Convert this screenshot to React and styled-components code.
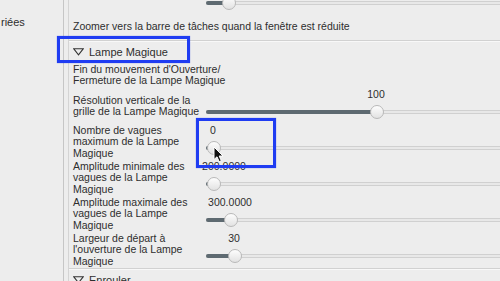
import React from 'react'
import styled, { createGlobalStyle } from 'styled-components'

const GlobalStyle = createGlobalStyle`
    html, body {
        margin: 0;
        padding: 0;
        background: #ededed;
    }
    body {
        font-family: "Liberation Sans", Arial, sans-serif;
    }
`

const Window = styled.div`
    position: relative;
    width: 500px;
    height: 281px;
    overflow: hidden;
    display: flex;
    gap: 4px;
    background: #ededed;
    color: #2e2e2e;
    font-size: 10.5px;
`

const Sidebar = styled.div`
    box-sizing: border-box;
    width: 64px;
    flex-shrink: 0;
    padding: 16px 0 0 1px;
    border-right: 1px solid #c6c6c6;
    font-size: 11px;
    line-height: 12px;
    white-space: nowrap;
`

const Panel = styled.div`
    flex: 1;
    min-width: 0;
    display: flex;
    flex-direction: column;
    border-left: 1px solid #d4d4d4;
`

const Scrolled = styled.div`
    margin-top: -21px;
    display: flex;
    flex-direction: column;
`

const Row = styled.div`
    box-sizing: border-box;
    display: grid;
    grid-template-columns: 133px 1fr;
    align-items: center;
    height: ${(p) => p.$height || 36}px;
    padding-left: 4px;
`

const PlainRow = styled.div`
    box-sizing: border-box;
    display: flex;
    align-items: center;
    height: ${(p) => p.$height}px;
    padding: 0 0 ${(p) => p.$bottom || 0}px 4px;
    line-height: 11.5px;
    white-space: nowrap;
`

const Label = styled.div`
    line-height: 11.5px;
    white-space: nowrap;
`

const Separator = styled.div`
    height: 1px;
    background: #d1d1d1;
    box-shadow: 0 1px 0 #f8f8f8;
    margin-bottom: 1px;
`

const Header = styled.div`
    box-sizing: border-box;
    display: flex;
    align-items: center;
    gap: 5px;
    height: 20px;
    padding-left: 4px;
    font-size: 11px;
    white-space: nowrap;
`

const Control = styled.div`
    display: flex;
    flex-direction: column;
    height: 36px;
`

const ValueText = styled.div`
    height: 12px;
    line-height: 12px;
    width: max-content;
    transform: translateX(-50%);
`

const SliderBox = styled.div`
    height: 24px;
    display: flex;
    align-items: center;
`

const Track = styled.div`
    position: relative;
    flex: 1;
    height: 2px;
    background: #e8e8e8;
    border: 1px solid #d0d0d0;
    border-right: none;
    border-radius: 2px 0 0 2px;
`

const Fill = styled.div`
    position: absolute;
    left: -1px;
    top: -1px;
    height: 4px;
    border-radius: 2px 0 0 2px;
    background: #5e6a71;
`

const Thumb = styled.div`
    position: absolute;
    top: -6px;
    box-sizing: border-box;
    width: 14px;
    height: 14px;
    margin-left: -7px;
    border-radius: 50%;
    border: 1px solid #b9b9b9;
    background: linear-gradient(#fdfdfd, #e2e2e2);
`

const Highlight = styled.div`
    position: absolute;
    box-sizing: border-box;
    border: 3px solid #1f3cf2;
    box-shadow: 0 0 1px rgba(31, 60, 242, 0.6);
    pointer-events: none;
`

const Cursor = styled.svg`
    position: absolute;
    left: 213px;
    top: 146px;
`

function Expander({ children }) {
    return (
        <Header>
            <svg width="11" height="8" viewBox="0 0 11 8">
                <polygon points="0.8,0.8 10.2,0.8 5.5,6.8" fill="none" stroke="#333" strokeWidth="1.1" />
            </svg>
            <span>{children}</span>
        </Header>
    )
}

function Slider({ value, thumb, valueX }) {
    return (
        <Control>
            <ValueText style={{ marginLeft: valueX }}>{value}</ValueText>
            <SliderBox>
                <Track>
                    <Fill style={{ width: thumb }} />
                    <Thumb style={{ left: thumb }} />
                </Track>
            </SliderBox>
        </Control>
    )
}

const sliders = [
    { label: ['Résolution verticale de la', 'grille de la Lampe Magique'], value: '100', thumb: 170, valueX: 170 },
    { label: ['Nombre de vagues', 'maximum de la Lampe', 'Magique'], value: '0', thumb: 7, valueX: 7 },
    { label: ['Amplitude minimale des', 'vagues de la Lampe', 'Magique'], value: '200.0000', thumb: 7, valueX: 18 },
    { label: ['Amplitude maximale des', 'vagues de la Lampe', 'Magique'], value: '300.0000', thumb: 24, valueX: 24 },
    { label: ["Largeur de départ à", "l'ouverture de la Lampe", 'Magique'], value: '30', thumb: 28, valueX: 28 },
]

export default function App() {
    return (
        <>
            <GlobalStyle />
            <Window>
                <Sidebar>riées</Sidebar>
                <Panel>
                    <Scrolled>
                        <Row>
                            <div />
                            <Slider value="" thumb={22} valueX={22} />
                        </Row>
                        <PlainRow $height={25} $bottom={2}>
                            Zoomer vers la barre de tâches quand la fenêtre est réduite
                        </PlainRow>
                        <Separator />
                        <Expander>Lampe Magique</Expander>
                        <PlainRow $height={26}>
                            <Label>
                                Fin du mouvement d'Ouverture/
                                <br />
                                Fermeture de la Lampe Magique
                            </Label>
                        </PlainRow>
                        {sliders.map((s) => (
                            <Row key={s.label[0]}>
                                <Label>
                                    {s.label.map((line, i) => (
                                        <React.Fragment key={i}>
                                            {i > 0 && <br />}
                                            {line}
                                        </React.Fragment>
                                    ))}
                                </Label>
                                <Slider value={s.value} thumb={s.thumb} valueX={s.valueX} />
                            </Row>
                        ))}
                        <Separator />
                        <Expander>Enrouler</Expander>
                    </Scrolled>
                </Panel>
                <Highlight style={{ left: 57, top: 36, width: 133, height: 27 }} />
                <Highlight style={{ left: 196, top: 118, width: 80, height: 50 }} />
                <Cursor width="12" height="17" viewBox="0 0 12 17">
                    <path d="M1 1 L1 13.5 L4 10.8 L6.2 15.6 L8.3 14.7 L6.2 10 L10 10 Z" fill="#111" stroke="#fff" strokeWidth="1" strokeLinejoin="round" />
                </Cursor>
            </Window>
        </>
    )
}
